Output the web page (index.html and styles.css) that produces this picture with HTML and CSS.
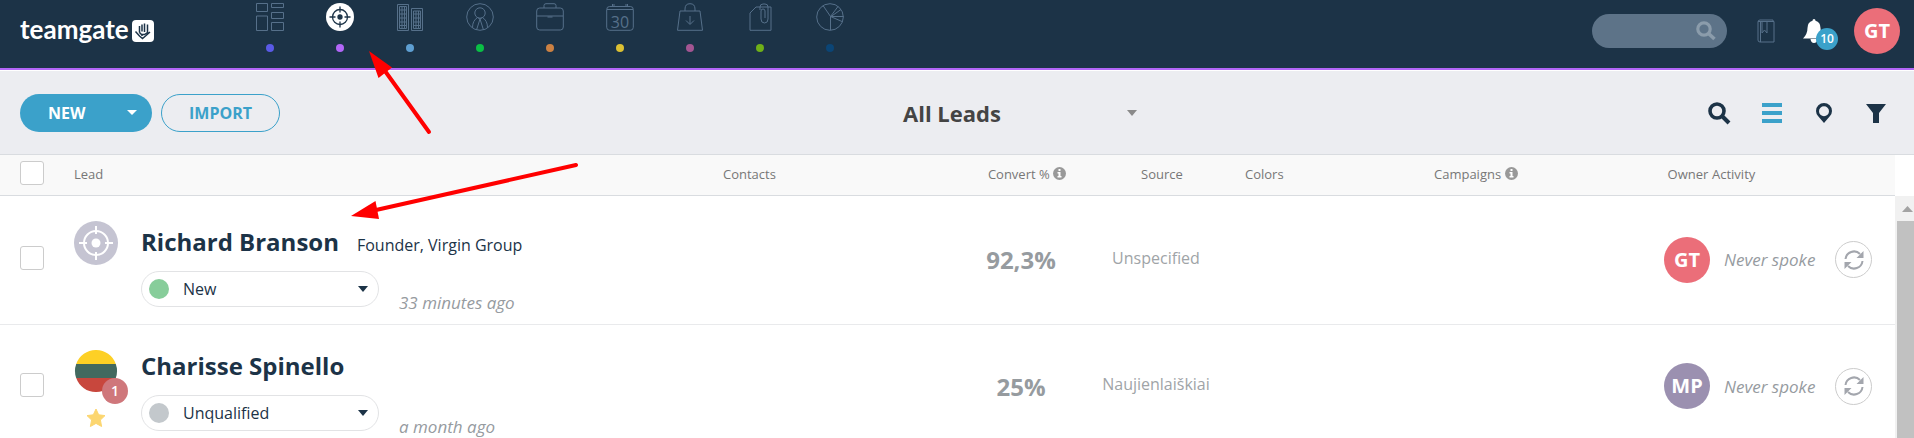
FILE: index.html
```html
<!DOCTYPE html>
<html lang="en">

<head>
    <meta charset="UTF-8">
    <meta name="viewport" content="width=device-width, initial-scale=1.0">
    <title>Leads</title>
    <link rel="stylesheet" href="styles.css">
</head>

<body>
    <header class="topbar">
        <a class="logo" href="#">
            <span>teamgate</span>
            <svg width="22" height="22" viewBox="0 0 22 22">
                <rect width="22" height="22" rx="4" fill="#fff"/>
                <path d="M3.500 11.500l4 4.500 3 2.500 3-2.500 4.500-4M7.500 6v6.500M10 4.500v7M12.500 3.500v8.500M15.500 4.500v9M7.500 12.500l2 2h3l3-2M10 14v2" fill="none" stroke="#1c3347" stroke-width="1.500"/>
            </svg>
        </a>
        <nav class="menu">
            <a href="#" aria-label="Dashboard">
                <svg class="icon" viewBox="0 0 28 28"><path d="M.5.5h11v8H.5zM15.500.5h12v4h-12zM.5 13h11v14.500H.5zM15.500 9.500h12v6h-12zM15.500 19.500h12v8h-12z"/></svg>
                <i class="dot indigo"></i>
            </a>
            <a href="#" aria-label="Leads">
                <svg class="icon active" viewBox="0 0 28 28"><circle class="disc" cx="14" cy="14" r="14"/><circle cx="14" cy="14" r="7.500"/><path d="M14 3.500v6M14 18.500v6M3.500 14h6M18.500 14h6"/><circle class="core" cx="14" cy="14" r="2"/></svg>
                <i class="dot purple"></i>
            </a>
            <a href="#" aria-label="Companies">
                <svg class="icon" viewBox="0 0 28 28"><path d="M1.500 1.500h11v26h-11zM15.500 5.500h11v22h-11z"/><path d="M3.500 3.500h7v22h-7zM3.500 7h7M3.500 11h7M3.500 15h7M3.500 19h7M3.500 22.500h7M6 3.500v22M8.500 3.500v22M17.500 8h7v17.500h-7zM17.500 11h7M17.500 15h7M17.500 19h7M17.500 22.500h7M20 8v17.500M22.500 8v17.500"/></svg>
                <i class="dot blue"></i>
            </a>
            <a href="#" aria-label="People">
                <svg class="icon" viewBox="0 0 28 28"><circle cx="14" cy="14" r="13.300"/><circle cx="14" cy="10" r="5.200"/><path d="M6.500 24.500c0-5 2-8 5-10l2.500 1.500 2.500-1.500c3 2 5 5 5 10M14 16l-3.500 11M14 16l3.500 11"/></svg>
                <i class="dot green"></i>
            </a>
            <a href="#" aria-label="Deals">
                <svg class="icon" viewBox="0 0 28 28"><rect x=".7" y="5" width="26.600" height="22" rx="3"/><path d="M8 5V2.500Q8 .7 10 .7h8q2 0 2 1.800V5M1 13h26M11.500 14h5"/></svg>
                <i class="dot orange"></i>
            </a>
            <a href="#" aria-label="Calendar">
                <svg class="icon" viewBox="0 0 28 28"><rect x=".7" y="3.500" width="26.600" height="23.800" rx="3"/><path d="M1 6.500h26M6.500 1v3M8 1v3M20 1v3M21.500 1v3"/><text x="14" y="25" text-anchor="middle">30</text></svg>
                <i class="dot yellow"></i>
            </a>
            <a href="#" aria-label="Products">
                <svg class="icon" viewBox="0 0 28 28"><path d="M4 8h20l2.500 19.300h-25zM9 8V6q0-5.300 5-5.300T19 6v2M14 13v8M10 17.500l4 4 4-4"/></svg>
                <i class="dot pink"></i>
            </a>
            <a href="#" aria-label="Files">
                <svg class="icon" viewBox="0 0 28 28"><path d="M14 4h11v23.300H4V10l6-6h4"/><path d="M14 7V4q0-3 3-3h2q3 0 3 3v12q0 4-3.500 4T15 16V8q0-2 2-2t2 2v7"/></svg>
                <i class="dot lime"></i>
            </a>
            <a href="#" aria-label="Insights">
                <svg class="icon" viewBox="0 0 28 28"><circle cx="14" cy="14" r="13.300"/><path d="M14.500 13.500L7 2.500M14.500 13.500L22 3.500M14.500 13.500h13M14.500 13.500l11.500 5M14.500 13.500V27M15 13.500l10-7"/></svg>
                <i class="dot navy"></i>
            </a>
        </nav>
        <div class="tools">
            <label class="search">
                <input type="text" aria-label="Search">
                <svg width="20" height="20" viewBox="0 0 20 20"><circle cx="8" cy="8" r="6.200" fill="none" stroke="currentColor" stroke-width="3.200"/><path d="M12.500 12.500l6 5.500" stroke="currentColor" stroke-width="3.600"/></svg>
            </label>
            <button class="book" aria-label="Guide">
                <svg width="18" height="24" viewBox="0 0 18 24" fill="none" stroke="#56708a"><path d="M1 2.500h16v20.500H3q-2 0-2-2V3q0-2 2-2h13v2M3.500 3v20M5 3v11l2.500-3 2.500 3V3"/></svg>
            </button>
            <button class="bell" aria-label="Notifications">
                <svg width="24" height="26" viewBox="0 0 24 26" fill="#fff"><path d="M12 1q1.500 0 1.500 1.700 5 1.500 5 7.300 0 6 4.500 10.500H1Q5.500 16 5.500 10q0-5.800 5-7.300Q10.500 1 12 1zM8.500 21h7q-.5 4-3.500 4t-3.500-4z"/></svg>
                <span class="count">10</span>
            </button>
            <span class="avatar red">GT</span>
        </div>
    </header>

    <section class="toolbar">
        <div class="actions">
            <button class="new">NEW <svg width="10" height="5" viewBox="0 0 10 5"><path d="M0 0h10L5 5z" fill="#fff"/></svg></button>
            <button class="import">IMPORT</button>
        </div>
        <div class="view">
            <select aria-label="View">
                <option>All Leads</option>
            </select>
            <svg width="10" height="6" viewBox="0 0 10 6"><path d="M0 0h10L5 6z" fill="#8a8a8a"/></svg>
        </div>
        <div class="modes">
            <button aria-label="Search leads"><svg width="24" height="24" viewBox="0 0 24 24"><circle cx="9" cy="10" r="7" fill="none" stroke="#1c3347" stroke-width="3.600"/><path d="M14 15l7 7" stroke="#1c3347" stroke-width="4"/></svg></button>
            <button aria-label="List"><svg width="24" height="24" viewBox="0 0 24 24"><path d="M2 2h20v4H2zM2 10h20v4H2zM2 18h20v4H2z" fill="#3ba1ca"/></svg></button>
            <button aria-label="Map"><svg width="24" height="24" viewBox="0 0 24 24"><path d="M12 22L6 15q-2-2.500-2-5a8 8 0 0 1 16 0q0 2.500-2 5zM12 5.200a5 5 0 1 0 0 10 5 5 0 0 0 0-10z" fill="#1c3347" fill-rule="evenodd"/></svg></button>
            <button aria-label="Filter"><svg width="24" height="24" viewBox="0 0 24 24"><path d="M2 3h20l-7 9v10H9V12z" fill="#1c3347"/></svg></button>
        </div>
    </section>

    <main class="list">
        <table class="leads">
            <colgroup>
                <col class="c-check">
                <col>
                <col class="c-contacts">
                <col class="c-convert">
                <col class="c-source">
                <col class="c-colors">
                <col class="c-campaigns">
                <col class="c-owner">
                <col class="c-activity">
            </colgroup>
            <thead>
                <tr>
                    <th class="check"><input type="checkbox" aria-label="Select all"></th>
                    <th>Lead</th>
                    <th>Contacts</th>
                    <th class="center">Convert % <svg class="info" width="13" height="13" viewBox="0 0 13 13"><circle cx="6.500" cy="6.500" r="6.500" fill="#999"/><path d="M5.500 2h2v2h-2zM4.500 5h3v4h1v1.500h-4V9h1V6.500h-1z" fill="#fff"/></svg></th>
                    <th class="center">Source</th>
                    <th>Colors</th>
                    <th>Campaigns <svg class="info" width="13" height="13" viewBox="0 0 13 13"><circle cx="6.500" cy="6.500" r="6.500" fill="#999"/><path d="M5.500 2h2v2h-2zM4.500 5h3v4h1v1.500h-4V9h1V6.500h-1z" fill="#fff"/></svg></th>
                    <th class="center">Owner</th>
                    <th>Activity</th>
                </tr>
            </thead>
            <tbody>
                <tr class="first">
                    <td class="check"><input type="checkbox" aria-label="Select Richard Branson"></td>
                    <td class="lead">
                        <div class="person">
                            <div class="photo">
                                <svg width="44" height="44" viewBox="0 0 44 44" fill="none" stroke="#fff" stroke-width="2"><circle cx="22" cy="22" r="22" fill="#c5c4d2" stroke="none"/><circle cx="22" cy="22" r="12"/><path d="M22 5v8M22 31v8M5 22h8M31 22h8"/><circle cx="22" cy="22" r="4.500" fill="#fff" stroke="none"/></svg>
                            </div>
                            <div>
                                <div class="title"><a class="name" href="#">Richard Branson</a><span class="job">Founder, Virgin Group</span></div>
                                <div class="state">
                                    <div class="status">
                                        <i class="mark new-mark"></i>
                                        <select aria-label="Status"><option>New</option></select>
                                        <svg width="10" height="6" viewBox="0 0 10 6"><path d="M0 0h10L5 6z" fill="#1c3347"/></svg>
                                    </div>
                                    <span class="time">33 minutes ago</span>
                                </div>
                            </div>
                        </div>
                    </td>
                    <td></td>
                    <td class="center percent">92,3%</td>
                    <td class="center source">Unspecified</td>
                    <td></td>
                    <td></td>
                    <td><span class="avatar red">GT</span></td>
                    <td>
                        <div class="activity">
                            <span>Never spoke</span>
                            <button class="refresh" aria-label="Refresh"><svg width="20" height="20" viewBox="0 0 20 20"><path d="M1.500 9A8.500 8.500 0 0 1 16 4M18.500 11A8.500 8.500 0 0 1 4 16" fill="none" stroke="#a3a6ad" stroke-width="2"/><path d="M19.500 1v7h-7zM.5 19v-7h7z" fill="#a3a6ad"/></svg></button>
                        </div>
                    </td>
                </tr>
                <tr class="second">
                    <td class="check"><input type="checkbox" aria-label="Select Charisse Spinello"></td>
                    <td class="lead">
                        <div class="person">
                            <div class="photo">
                                <svg width="44" height="42" viewBox="0 0 44 42"><path d="M2.200 14a21 21 0 0 1 39.600 0z" fill="#fdd025"/><path d="M2.200 14h39.600a21 21 0 0 1 0 14H2.200a21 21 0 0 1 0-14z" fill="#42695f"/><path d="M2.200 28h39.600a21 21 0 0 1-39.600 0z" fill="#c8473d"/></svg>
                                <span class="alerts">1</span>
                                <svg class="star" width="20" height="20" viewBox="0 0 20 20"><path d="M10 1l2.700 5.800 6.300.8-4.600 4.400 1.200 6.500L10 15.400l-5.600 3.100L5.600 12 1 7.600l6.300-.8z" fill="#fcd670" stroke="#fcd670" stroke-linejoin="round"/></svg>
                            </div>
                            <div>
                                <div class="title"><a class="name" href="#">Charisse Spinello</a></div>
                                <div class="state">
                                    <div class="status">
                                        <i class="mark"></i>
                                        <select aria-label="Status"><option>Unqualified</option></select>
                                        <svg width="10" height="6" viewBox="0 0 10 6"><path d="M0 0h10L5 6z" fill="#1c3347"/></svg>
                                    </div>
                                    <span class="time">a month ago</span>
                                </div>
                            </div>
                        </div>
                    </td>
                    <td></td>
                    <td class="center percent">25%</td>
                    <td class="center source">Naujienlaiškiai</td>
                    <td></td>
                    <td></td>
                    <td><span class="avatar violet">MP</span></td>
                    <td>
                        <div class="activity">
                            <span>Never spoke</span>
                            <button class="refresh" aria-label="Refresh"><svg width="20" height="20" viewBox="0 0 20 20"><path d="M1.500 9A8.500 8.500 0 0 1 16 4M18.500 11A8.500 8.500 0 0 1 4 16" fill="none" stroke="#a3a6ad" stroke-width="2"/><path d="M19.500 1v7h-7zM.5 19v-7h7z" fill="#a3a6ad"/></svg></button>
                        </div>
                    </td>
                </tr>
            </tbody>
        </table>
        <div class="scroll">
            <div class="up"><svg width="11" height="6" viewBox="0 0 11 6"><path d="M0 6h11L5.500 0z" fill="#a3a3a3"/></svg></div>
            <div class="thumb"></div>
        </div>
    </main>

    <svg class="arrows" width="600" height="230" viewBox="0 0 600 230" fill="#f00" stroke="#f00" stroke-linecap="round">
        <path d="M385 71l44 61" stroke-width="4"/>
        <path d="M369 51l23 16.500L378.500 78z" stroke="none"/>
        <path d="M376 210l200-45" stroke-width="4"/>
        <path d="M351 216l24.500-15 3.500 18z" stroke="none"/>
    </svg>
</body>

</html>
```
FILE: styles.css
```css
* {
    margin: 0;
    padding: 0;
    box-sizing: border-box;
}

html,
body {
    height: 100%;
}

body {
    position: relative;
    display: flex;
    flex-direction: column;
    overflow: hidden;
    background: #fff;
    color: #1c3347;
    font-family: "Open Sans", "Noto Sans", sans-serif;
    font-size: 16px;
}

a {
    color: inherit;
    text-decoration: none;
}

button {
    border: none;
    background: none;
    font-family: inherit;
}

select {
    appearance: none;
    border: none;
    background: none;
    color: inherit;
    font-family: inherit;
}

svg {
    display: block;
}

/* top bar */
.topbar {
    display: flex;
    flex: none;
    height: 70px;
    padding: 0 14px 0 20px;
    background: #1c3347;
    border-bottom: 2px solid #b266f7;
}

.logo {
    display: flex;
    width: 215px;
    height: 62px;
    align-items: center;
    gap: 3px;
    color: #fff;
    font-family: Lato, sans-serif;
    font-size: 26px;
    font-weight: bold;
    line-height: 30px;
}

.logo span {
    padding-bottom: 4px;
}

.menu {
    display: flex;
}

.menu a {
    display: flex;
    width: 70px;
    flex-direction: column;
    align-items: center;
    gap: 13px;
    padding-top: 3px;
}

.icon {
    width: 28px;
    height: 28px;
    fill: none;
    stroke: #56708a;
}

.icon text {
    fill: #56708a;
    stroke: none;
    font-size: 16px;
}

.icon.active {
    stroke: #1c3347;
    stroke-width: 1.3;
}

.icon .disc {
    fill: #fff;
    stroke: none;
}

.icon .core {
    fill: #1c3347;
}

.dot {
    width: 8px;
    height: 8px;
    border-radius: 50%;
}

.indigo { background: #5a5ae6; }
.purple { background: #b266f7; }
.blue { background: #5e9fd2; }
.green { background: #0abf45; }
.orange { background: #cb8143; }
.yellow { background: #dbc033; }
.pink { background: #a35592; }
.lime { background: #6fb018; }
.navy { background: #0b4576; }

.tools {
    display: flex;
    height: 62px;
    align-items: center;
    margin-left: auto;
}

.search {
    display: flex;
    width: 135px;
    height: 34px;
    align-items: center;
    margin-right: 30px;
    padding: 0 11px 0 16px;
    border-radius: 17px;
    background: #5d7388;
    color: #8b9cab;
}

.search input {
    flex: 1;
    min-width: 0;
    border: none;
    outline: none;
    background: none;
    color: #fff;
}

.bell {
    position: relative;
    margin: 0 28px 0 27px;
}

.count {
    position: absolute;
    top: 10px;
    left: 14px;
    width: 22px;
    height: 22px;
    border-radius: 50%;
    background: #3ba1ca;
    color: #fff;
    font-size: 12px;
    font-weight: 600;
    line-height: 22px;
    text-align: center;
}

.avatar {
    display: block;
    width: 46px;
    height: 46px;
    border-radius: 50%;
    color: #fff;
    font-size: 20px;
    font-weight: bold;
    line-height: 46px;
    text-align: center;
}

.red {
    background: #eb6e79;
}

.violet {
    background: #9b90b0;
}

/* toolbar */
.toolbar {
    display: grid;
    flex: none;
    grid-template-columns: 1fr 366px 1fr;
    height: 85px;
    align-items: center;
    padding: 0 26px 0 20px;
    background: #ecedf1;
    border-top: 1px solid #fff;
    border-bottom: 1px solid #d9dce0;
}

.actions {
    display: flex;
    gap: 9px;
}

.actions button {
    height: 38px;
    border-radius: 19px;
    font-size: 16px;
    font-weight: bold;
}

.new {
    display: flex;
    width: 132px;
    align-items: center;
    justify-content: space-between;
    padding: 0 15px 0 28px;
    background: #3ba1ca;
    color: #fff;
}

.import {
    width: 119px;
    border: 1px solid #3ba1ca;
    color: #3ba1ca;
}

.view {
    display: flex;
    align-items: center;
}

.view select {
    flex: 1;
    padding-left: 6px;
    color: #444;
    font-size: 22px;
    font-weight: bold;
    text-align: center;
    text-align-last: center;
}

.modes {
    display: flex;
    justify-content: flex-end;
    gap: 28px;
}

/* list */
.list {
    display: flex;
    flex: 1;
    min-height: 0;
}

.leads {
    flex: 1;
    height: 100%;
    table-layout: fixed;
    border-collapse: collapse;
}

.c-check { width: 74px; }
.c-contacts { width: 252px; }
.c-convert { width: 104px; }
.c-source { width: 166px; }
.c-colors { width: 189px; }
.c-campaigns { width: 230px; }
.c-owner { width: 48px; }
.c-activity { width: 183px; }

.leads th {
    height: 40px;
    padding-bottom: 2px;
    background: #f9f9f9;
    border-bottom: 1px solid #d9dce0;
    color: #777;
    font-size: 13px;
    font-weight: normal;
    text-align: left;
    white-space: nowrap;
}

.leads td {
    border-bottom: 1px solid #e9eaec;
}

.leads .center {
    text-align: center;
}

.info {
    display: inline-block;
    vertical-align: -1px;
}

.leads .check {
    padding-bottom: 3px;
    padding-left: 20px;
}

.check input {
    display: block;
    width: 24px;
    height: 24px;
    appearance: none;
    border: 1px solid #ccc;
    border-radius: 3px;
    background: #fff;
}

.first {
    height: 129px;
}

.second {
    height: 124px;
}

.leads .lead {
    padding-top: 20px;
    vertical-align: top;
}

.leads .second .lead {
    padding-top: 15px;
}

.person {
    display: flex;
}

.photo {
    position: relative;
    width: 67px;
    padding-top: 5px;
}

.second .photo {
    padding-top: 10px;
}

.alerts {
    position: absolute;
    top: 38px;
    left: 28px;
    width: 26px;
    height: 26px;
    border-radius: 50%;
    background: #cf777b;
    color: #fff;
    font-size: 14px;
    font-weight: 600;
    line-height: 26px;
    text-align: center;
}

.star {
    margin: 16px 0 0 12px;
}

.title {
    display: flex;
    height: 51px;
    align-items: baseline;
    gap: 18px;
    line-height: 51px;
}

.name {
    font-size: 24px;
    font-weight: bold;
}

.job {
    font-size: 16px;
}

.state {
    display: flex;
    gap: 20px;
    padding-top: 4px;
}

.status {
    display: flex;
    width: 238px;
    height: 36px;
    align-items: center;
    gap: 14px;
    padding: 0 10px 0 7px;
    border: 1px solid #e2e3e5;
    border-radius: 18px;
}

.status select {
    flex: 1;
    font-size: 16px;
}

.mark {
    width: 20px;
    height: 20px;
    border-radius: 50%;
    background: #c3c8cc;
}

.new-mark {
    background: #87cd9a;
}

.time,
.activity {
    color: #969b9f;
    font-size: 17px;
    font-style: italic;
}

.time {
    padding-top: 20px;
    line-height: 24px;
}

.leads .percent {
    padding-right: 12px;
    color: #969b9f;
    font-size: 24px;
    font-weight: bold;
}

.leads .source {
    padding-right: 12px;
    padding-bottom: 4px;
    color: #a0a4a7;
    font-size: 16px;
}

.activity {
    display: flex;
    align-items: center;
    gap: 20px;
    padding-left: 12px;
}

.refresh {
    display: flex;
    width: 37px;
    height: 37px;
    align-items: center;
    justify-content: center;
    border: 1px solid #ccc;
    border-radius: 50%;
}

/* scrollbar of the list */
.scroll {
    display: flex;
    width: 19px;
    flex-direction: column;
    margin-top: 41px;
    padding-left: 2px;
    background: #f1f1f1;
}

.up {
    height: 25px;
    padding: 10px 0 0 5px;
}

.thumb {
    flex: 1;
    background: #c1c1c1;
}

/* pointers drawn over the page */
.arrows {
    position: absolute;
    top: 0;
    left: 0;
    pointer-events: none;
}
```
